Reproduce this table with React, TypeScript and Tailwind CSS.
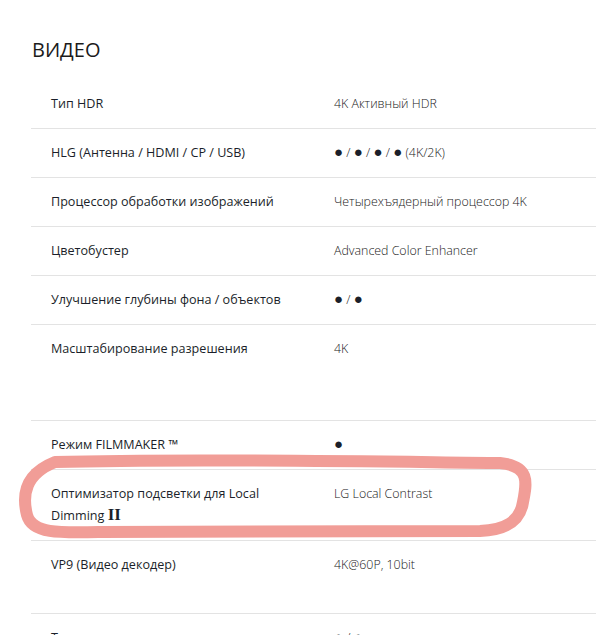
import React from 'react'

type Spec = { label: React.ReactNode; value: React.ReactNode; minH?: string }

const Dot = () => <span className="text-[15px] leading-none text-[#1b1f2a]">●</span>

const specs: Spec[] = [
    { label: 'Тип HDR', value: '4K Активный HDR' },
    { label: 'HLG (Антенна / HDMI / CP / USB)', value: <><Dot /> / <Dot /> / <Dot /> / <Dot /> (4K/2K)</> },
    { label: 'Процессор обработки изображений', value: 'Четырехъядерный процессор 4K' },
    { label: 'Цветобустер', value: 'Advanced Color Enhancer' },
    { label: 'Улучшение глубины фона / объектов', value: <><Dot /> / <Dot /></> },
    { label: 'Масштабирование разрешения', value: '4K', minH: 'min-h-[96px]' },
    { label: 'Режим FILMMAKER ™', value: <Dot /> },
    {
        label: <>Оптимизатор подсветки для Local Dimming <span className="font-['Liberation_Serif',serif] font-bold text-[17px] leading-none">II</span></>,
        value: 'LG Local Contrast',
    },
    { label: 'VP9 (Видео декодер)', value: '4K@60P, 10bit', minH: 'min-h-[73px]' },
    { label: 'Технология динамического отображения тонов', value: <><Dot /> / <Dot /></> },
]

export default function App() {
    return (
        <div className="relative w-[596px] h-[635px] overflow-hidden bg-white font-['Open_Sans',sans-serif]">
            <div className="pl-[31px] pt-[36px]">
                <h2 className="text-[20px] leading-[28px] text-[#1b1b1b] mb-[16px] ml-px">ВИДЕО</h2>
                <div>
                    {specs.map((s, i) => (
                        <div key={i} className={`flex border-b border-[#e3e3e3] ${s.minH ?? ''}`}>
                            <div className="w-[303px] shrink-0 pl-5 pr-[30px] py-[13px] text-[12.6px] leading-[22px] text-[#1b1f2a]">
                                {s.label}
                            </div>
                            <div className="flex-1 py-[13px] text-[12.4px] leading-[22px] font-light text-[#222]">
                                {s.value}
                            </div>
                        </div>
                    ))}
                </div>
            </div>
            {/* red marker annotation */}
            <svg className="absolute left-0 top-0 pointer-events-none" width="596" height="635">
                <path
                    d="M 55 462 C 200 458, 400 462, 500 463 C 530 466, 527 482, 523 502 C 520 522, 505 530, 480 531 L 100 532 C 60 533, 32 534, 27 515 C 22 495, 25 474, 55 462 Z"
                    fill="none"
                    stroke="#f19d97"
                    strokeWidth="12"
                    strokeLinejoin="round"
                />
            </svg>
        </div>
    )
}
